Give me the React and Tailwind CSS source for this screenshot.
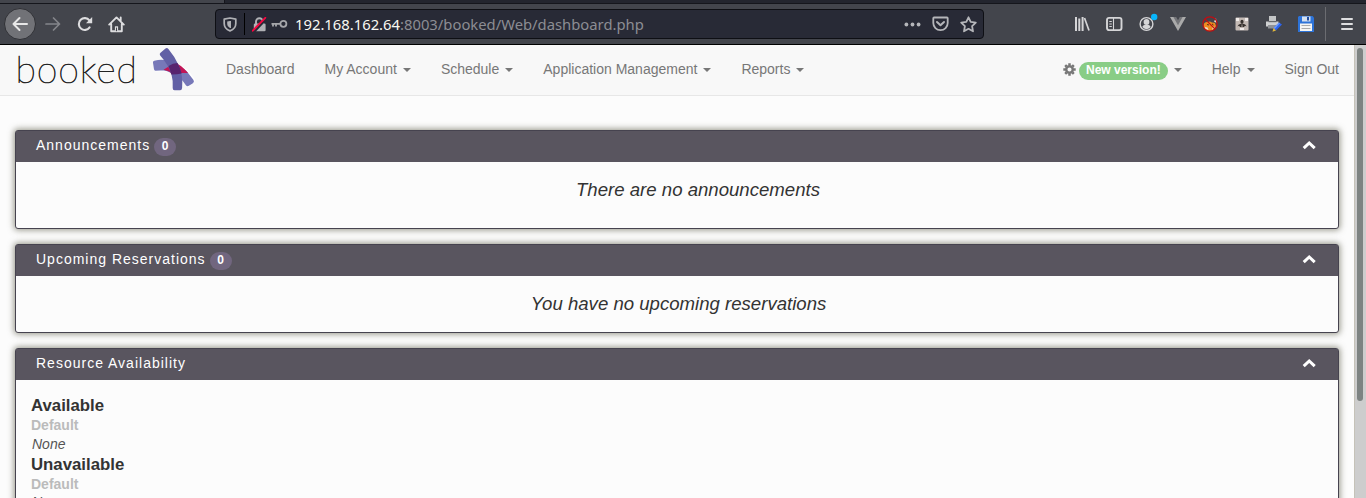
import React from 'react';

function BackIcon() {
  return (
    <svg width="16" height="16" viewBox="0 0 16 16" fill="none" stroke="#e8e8e8" strokeWidth="2" strokeLinecap="round" strokeLinejoin="round">
      <path d="M15 8H1.5M7.5 2 1.5 8l6 6" />
    </svg>
  );
}

function ForwardIcon() {
  return (
    <svg width="16" height="16" viewBox="0 0 16 16" fill="none" stroke="#84858a" strokeWidth="1.7" strokeLinecap="round" strokeLinejoin="round">
      <path d="M1 8h13.5M8.5 2l6 6-6 6" />
    </svg>
  );
}

function ReloadIcon() {
  return (
    <svg width="16" height="16" viewBox="0 0 16 16" fill="none">
      <path d="M12.6 11.4A5.9 5.9 0 1 1 12.4 4.4" stroke="#dddddf" strokeWidth="2.1" strokeLinecap="round" />
      <path d="M15.2 1v6.2H9z" fill="#dddddf" />
    </svg>
  );
}

function HomeIcon() {
  return (
    <svg width="17" height="17" viewBox="0 0 17 17" fill="none" stroke="#dddddf" strokeWidth="1.9" strokeLinecap="round" strokeLinejoin="round">
      <path d="M1.2 8.6 8.5 1.4l7.3 7.2M3.2 8v7.3h10.6V8M12.7 1.5v3" />
      <path d="M8.5 14.5v-4.2" strokeWidth="3.2" strokeLinecap="butt" />
      <path d="M8.5 15.2v-3.6" stroke="#43454c" strokeWidth="1" strokeLinecap="butt" />
    </svg>
  );
}

function ShieldIcon() {
  return (
    <svg width="14" height="15" viewBox="0 0 14 15" fill="none">
      <path d="M7 1 1.2 2.2v4.3c0 3.5 2 6 5.8 7.4 3.8-1.4 5.8-3.9 5.8-7.4V2.2z" stroke="#b0b1b5" strokeWidth="1.7" strokeLinejoin="round" />
      <path d="M7 4 4.2 4.6v2.2c0 1.9 1 3.2 2.8 4.1z" fill="#b0b1b5" />
      <path d="M7.5 4v7" stroke="#b0b1b5" strokeWidth="1" />
    </svg>
  );
}

function InsecureLockIcon() {
  return (
    <svg width="15" height="15" viewBox="0 0 15 15" fill="none">
      <path d="M4 7V4.6a3.4 3.4 0 0 1 6.8 0V7" stroke="#b0b1b5" strokeWidth="1.9" />
      <rect x="1.8" y="6.6" width="11.8" height="7.7" rx="1.2" fill="#b0b1b5" />
      <path d="M2.2 14.8 14.2 2" stroke="#282a36" strokeWidth="2.2" />
      <path d="M.8 13.7 13.3.8" stroke="#f5053f" strokeWidth="1.9" strokeLinecap="round" />
    </svg>
  );
}

function KeyIcon() {
  return (
    <svg width="17" height="10" viewBox="0 0 17 10" fill="none" stroke="#a5a6aa">
      <circle cx="12.4" cy="4.8" r="3" strokeWidth="1.8" />
      <path d="M9.5 4.8H.5M2 5v2.6M5 5v2.6" strokeWidth="1.8" />
    </svg>
  );
}

function DotsIcon() {
  return (
    <svg width="17" height="5" viewBox="0 0 17 5" fill="#b5b6ba">
      <circle cx="2.4" cy="2.5" r="1.9" />
      <circle cx="8.5" cy="2.5" r="1.9" />
      <circle cx="14.6" cy="2.5" r="1.9" />
    </svg>
  );
}

function PocketIcon() {
  return (
    <svg width="17" height="16" viewBox="0 0 17 16" fill="none" stroke="#b5b6ba" strokeWidth="1.8" strokeLinecap="round" strokeLinejoin="round">
      <path d="M2 1.5h13c.5 0 .7.3.7.7V7a7.200 7.200 0 0 1-14.400 0V2.200c0-.4.2-.7.7-.7z" />
      <path d="m5 6 3.500 3.300L12 6" strokeWidth="2" />
    </svg>
  );
}

function StarIcon() {
  return (
    <svg width="17" height="17" viewBox="0 0 17 17" fill="none" stroke="#b5b6ba" strokeWidth="1.8" strokeLinejoin="round">
      <path d="m8.500 1.300 2.200 4.600 5.100.7-3.700 3.500.9 5.200-4.500-2.500L4 15.300l.9-5.200L1.200 6.600l5.100-.7z" />
    </svg>
  );
}

function LibraryIcon() {
  return (
    <svg width="16" height="16" viewBox="0 0 16 16" fill="none" stroke="#d5d5d7" strokeWidth="2">
      <path d="M2 1v14M5.3 2.500V15M8.600 1v14" />
      <path d="m10.500 2 4.500 12.500" strokeWidth="1.700" />
    </svg>
  );
}

function SidebarIcon() {
  return (
    <svg width="17" height="16" viewBox="0 0 17 16" fill="none" stroke="#d5d5d7">
      <rect x="1" y="1.900" width="14.500" height="12.200" rx="2" strokeWidth="1.900" />
      <path d="M7.500 2v12M3.300 5.500h2.500M3.300 8h2.500M3.300 10.500h2.500" strokeWidth="1.100" />
    </svg>
  );
}

function AccountIcon() {
  return (
    <svg width="19" height="19" viewBox="0 0 19 19" fill="none">
      <circle cx="7.500" cy="11" r="6.400" stroke="#d5d5d7" strokeWidth="1.400" />
      <circle cx="7.500" cy="9" r="2.900" fill="#d5d5d7" />
      <path d="M3.300 14c.7-1.700 2-2.100 3-2.300h2.400c1 .2 2.300.6 3 2.300a5.200 5.200 0 0 1-8.400 0z" fill="#d5d5d7" />
      <circle cx="15.200" cy="4" r="3.200" fill="#08b5fb" />
    </svg>
  );
}

function VueIcon() {
  return (
    <svg width="16" height="14" viewBox="0 0 16 14">
      <path d="M0 0h4.500L8 6.300 11.500 0H16L8 14z" fill="#aaa" />
      <path d="M3.400 0h2.800L8 3.200 9.800 0h2.800L8 8.200z" fill="#747579" />
    </svg>
  );
}

function FoxBlockedIcon() {
  return (
    <svg width="16" height="16" viewBox="0 0 16 16" fill="none">
      <path d="M1.500 10c0-2.500 1.500-4 3.500-4l3-.5 2 1c1.500.2 2.500 0 3 .5l1 3c-1 3-3.500 4.500-6.500 5-3 0-5-1.500-6-5z" fill="#ef8b20" />
      <path d="m12 5.500 2-3.500.6 5zM2.500 11l3 .5 1 2.500-3-1zM11 10.500l2 .5-3 3z" fill="#e9dfd2" />
      <path d="m5 8.500 2 .5M10 8l1.500 1" stroke="#573019" strokeWidth="1" />
      <circle cx="8" cy="8" r="7.200" stroke="#c20d12" strokeWidth="1.200" />
      <path d="m2.800 2.800 10.400 10.400" stroke="#c20d12" strokeWidth="1.200" />
    </svg>
  );
}

function PortraitIcon() {
  return (
    <svg width="14" height="14" viewBox="0 0 14 14">
      <rect x=".5" y=".5" width="13" height="13" rx="1" fill="#c4bab5" />
      <path d="M1 1h3v3H1zM10 1h3v3h-3zM5 11h4v2H5z" fill="#f0ebe9" />
      <ellipse cx="7" cy="4.800" rx="1.600" ry="2" fill="#38322f" />
      <path d="M2.500 9.500q.5-2.500 4.500-3 4 .5 4.500 3L10 8.800 9 10H5L4 8.800z" fill="#38322f" />
      <path d="M6.500 7.500h1v3h-1z" fill="#a59b97" />
    </svg>
  );
}

function PrinterIcon() {
  return (
    <svg width="16" height="16" viewBox="0 0 16 16">
      <path d="M3 0h7v5H3z" fill="#c3c5c6" />
      <path d="M0 5.500h12.500v5H0z" fill="#d0d1d2" />
      <path d="M2.500 5h8v1.200h-8z" fill="#66686c" />
      <path d="M2 9h8v3.500H2z" fill="#909296" />
      <path d="M13 6.500 16 8.500 10 14.500 7.500 12z" fill="#2c63ed" />
      <path d="m13 6.500 1 .8L8.700 13l-1.200-1z" fill="#6a9bff" />
      <path d="M7.500 12 10 14.500l-3.500 1.300z" fill="#e2b73b" />
    </svg>
  );
}

function FloppyIcon() {
  return (
    <svg width="16" height="16" viewBox="0 0 16 16">
      <path d="M1 0h13.500L16 1.500V16H0V1z" fill="#2d73d8" />
      <path d="M4 .5h8.500v5H4z" fill="#d5e0ee" />
      <path d="M9 1h2v3.500H9z" fill="#204c9f" />
      <path d="M2 7.500h12V15H2z" fill="#f5f5f3" />
      <path d="M3.500 9.500h9M3.500 12.500h9" stroke="#aaa" />
    </svg>
  );
}

function MenuIcon() {
  return (
    <svg width="12" height="12" viewBox="0 0 12 12" stroke="#dedee0" strokeWidth="2" strokeLinecap="round">
      <path d="M1 1h10M1 6h10M1 11h10" />
    </svg>
  );
}

function GearIcon() {
  return (
    <svg className="-mt-0.5" width="13" height="13" viewBox="-6.5 -6.5 13 13" fill="none">
      <circle r="3.300" stroke="#777" strokeWidth="2.500" />
      <g stroke="#777" strokeWidth="2.500">
        <path d="M0-6.200v2M0 6.200v-2M-6.200 0h2M6.200 0h-2" />
        <path d="m-4.300-4.300 1.300 1.300M4.300-4.300 3-3M-4.300 4.300-3 3M4.300 4.300 3 3" />
      </g>
    </svg>
  );
}

function BookedMark() {
  return (
    <svg className="block" width="46" height="46" viewBox="0 0 46 46" fill="none" strokeLinejoin="round">
      <path d="M2.800 16.500 12 14l10 2.500 13 8.500 6 8.500-5 4-6-8-8-5.500L12 22l-8 .5z" stroke="#fff" strokeWidth="4" />
      <path d="M1 15.800q-.4-1.500 1.300-2Q9 12 15.500 13.500l8 3 11 7.500 7 9q1.200 1.800-.6 3.200l-4 2.600q-1.800 1.200-3-.6-4.500-6.500-9.200-9.100-8-5-13-5.500-4-.4-8 .2-1.600.2-1.800-2z" fill="#7778b8" />
      <path d="M22 15.500q6.500 1.500 14 10.500h-7l-2 1.500-5.500-.5q-5-3.500-10-4.200l6-3.800z" fill="#c21556" />
      <path d="M8.500 5.800 13.500 1.500q1.500-1.200 2.900.4 6 7 10.400 16.500 4.300 9.500 3.300 22.600-.2 2.200-2 2.200h-5.500q-2 0-1.900-2.200.5-7.500-1.300-14Q16.500 18 8.200 8.500q-1.200-1.600.3-2.700z" fill="#6260a5" />
      <path d="M16.500 19q4.500-3 9-3 3 5.500 4.200 10.500-4 1-10.500 1-.7-4-2.700-8.500z" fill="#57246f" />
    </svg>
  );
}

function ChevronUp() {
  return (
    <svg className="block" width="14" height="10" viewBox="0 0 14 10" fill="none" stroke="#fff" strokeWidth="3">
      <path d="m1.700 8.200 5.500-5.200 5.500 5.200" />
    </svg>
  );
}

function Caret() {
  return <span className="ml-1.5 inline-block border-x-4 border-t-4 border-x-transparent border-t-[#777]" />;
}

function NavItem({ label, menu }) {
  return (
    <a className="flex h-[50px] items-center px-[15px] whitespace-nowrap">
      <span className="-mt-0.5">{label}</span>
      {menu && <Caret />}
    </a>
  );
}

function Browser() {
  return (
    <header className="flex h-[45px] shrink-0 flex-col border-b border-black bg-[#43454c]">
      <div className="flex h-1 shrink-0 border-b border-[#15161c]">
        <div className="w-56 bg-[#43454c]" />
        <div className="flex-1 border-l border-[#15161c] bg-[#23252e]" />
      </div>
      <div className="flex h-10 items-center">
        <div className="flex w-[215px] items-center pl-1">
          <div className="grid size-8 place-items-center rounded-full border border-[#303136] bg-[#717277]"><BackIcon /></div>
          <div className="ml-[9px]"><ForwardIcon /></div>
          <div className="ml-4"><ReloadIcon /></div>
          <div className="ml-[15px]"><HomeIcon /></div>
        </div>
        <div className="flex h-[30px] w-[769px] items-center rounded-[4px] border border-[#0e0f14] bg-[#282a36]">
          <div className="ml-[7px]"><ShieldIcon /></div>
          <div className="ml-[7px] h-[22px] w-px bg-black" />
          <div className="ml-[7px]"><InsecureLockIcon /></div>
          <div className="ml-1"><KeyIcon /></div>
          <div className="ml-[7px] flex-1 font-['Noto_Sans',sans-serif] text-[14.8px] leading-5 text-[#8c8d93]">
            <span className="text-[#f8f8f2]">192.168.162.64</span>:8003/booked/Web/dashboard.php
          </div>
          <div className="flex items-center gap-[11px] pr-[6px]">
            <DotsIcon /><PocketIcon /><StarIcon />
          </div>
        </div>
        <div className="ml-[90px] grid h-full grid-cols-8 items-center">
          <div className="w-8"><LibraryIcon /></div>
          <div className="w-8"><SidebarIcon /></div>
          <div className="w-8 -translate-y-0.5 pl-[0.5px]"><AccountIcon /></div>
          <div className="w-8"><VueIcon /></div>
          <div className="w-8"><FoxBlockedIcon /></div>
          <div className="w-8 pl-px"><PortraitIcon /></div>
          <div className="w-8"><PrinterIcon /></div>
          <div className="w-8"><FloppyIcon /></div>
        </div>
        <div className="-ml-[5px] h-[34px] w-px bg-[#6b6c71]" />
        <div className="ml-[15px]"><MenuIcon /></div>
      </div>
    </header>
  );
}

function Navbar() {
  return (
    <nav className="flex h-[51px] shrink-0 border-b border-[#e7e7e7] bg-[#f8f8f8]">
      <div className="flex w-[211px] shrink-0">
        <div className="w-[152px] shrink-0 pl-[15.5px] font-['Lato',sans-serif] text-[37.5px] leading-[48px] font-thin tracking-[0.9px] text-[#222] [-webkit-text-stroke:0.7px_#222]">booked</div>
        <div className="pt-0.5"><BookedMark /></div>
      </div>
      <div className="flex flex-1">
        <NavItem label="Dashboard" />
        <NavItem label="My Account" menu />
        <NavItem label="Schedule" menu />
        <NavItem label="Application Management" menu />
        <NavItem label="Reports" menu />
      </div>
      <div className="flex">
        <a className="flex h-[50px] items-center px-[15px]">
          <GearIcon />
          <span className="mt-0.5 ml-[3px] flex h-[18px] items-center rounded-full bg-[#89cd86] px-[7px] pb-[3px] text-xs font-bold whitespace-nowrap text-white">New version!</span>
          <Caret />
        </a>
        <NavItem label="Help" menu />
        <NavItem label="Sign Out" />
      </div>
    </nav>
  );
}

function Panel({ title, count, className, children }) {
  return (
    <section className={'shrink-0 rounded-[3px] border border-[#46434f] bg-[#fcfcfc] shadow-[0_0_6px_1px_rgba(90,90,70,0.65)] ' + className}>
      <div className="flex h-[31px] items-center bg-[#59555f] pr-[22px] pl-5 text-white">
        <span className="-mt-[3px] tracking-[1px]">{title}</span>
        {count !== undefined && (
          <span className="mt-px ml-[4px] flex h-[18px] w-[22px] items-center justify-center rounded-full bg-[#71667f] pb-[3px] text-xs font-bold">{count}</span>
        )}
        <span className="-mt-[4px] ml-auto"><ChevronUp /></span>
      </div>
      {children}
    </section>
  );
}

function Availability({ status, groupClass }) {
  return (
    <div>
      <div className="h-[21px] text-[16.8px] leading-[22px] font-bold text-[#333]">{status}</div>
      <div className={'leading-[19px] font-bold text-[#bbb] ' + groupClass}>Default</div>
      <div className="h-[19px] pl-px leading-[18px] text-[#555] italic">None</div>
    </div>
  );
}

export default function App() {
  return (
    <div className="flex h-[498px] w-[1366px] flex-col overflow-hidden bg-[#fcfcfc] font-['Liberation_Sans',Arial,sans-serif] text-sm leading-5 text-[#777]">
      <Browser />
      <div className="flex min-h-0 flex-1">
        <div className="flex min-w-0 flex-1 flex-col overflow-hidden">
          <Navbar />
          <main className="flex flex-col gap-[15px] px-[15px] pt-[34px]">
            <Panel title="Announcements" count={0} className="h-[99px]">
              <p className="pt-[18px] pl-[42px] text-center text-[18.6px] leading-5 text-[#333] italic">There are no announcements</p>
            </Panel>
            <Panel title="Upcoming Reservations" count={0} className="h-[89px]">
              <p className="pt-[18px] pl-[3px] text-center text-[18.6px] leading-5 text-[#333] italic">You have no upcoming reservations</p>
            </Panel>
            <Panel title="Resource Availability" className="h-[220px]">
              <div className="px-[15px] pt-[15px]">
                <Availability status="Available" groupClass="h-[19px]" />
                <Availability status="Unavailable" groupClass="h-[18px]" />
              </div>
            </Panel>
          </main>
        </div>
        <div className="w-3 shrink-0 border-l border-[#c5c2b8] bg-[#cdcdcd] pt-[3px] pl-0.5">
          <div className="h-[353px] w-1.5 rounded-full bg-[#7d8382]" />
        </div>
      </div>
    </div>
  );
}
